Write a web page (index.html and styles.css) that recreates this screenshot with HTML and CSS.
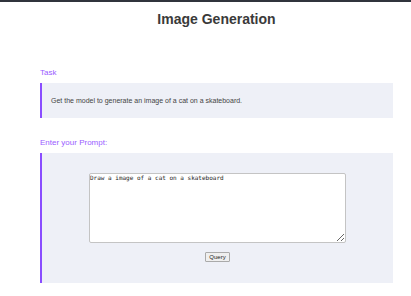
FILE: index.html
```html
<!DOCTYPE html>
<html lang="en">
<head>
    <meta charset="UTF-8">
    <meta name="viewport" content="width=device-width, initial-scale=1.0">
    <title>Image Generation</title>
    <link rel="stylesheet" href="styles.css">
</head>
<body>
    <header class="topbar"></header>

    <main class="page">
        <h1 class="title">Image Generation</h1>

        <section class="section task-section">
            <div class="section-label">Task</div>
            <div class="panel task-panel">
                <p>Get the model to generate an image of a cat on a skateboard.</p>
            </div>
        </section>

        <section class="section prompt-section">
            <label class="section-label" for="prompt">Enter your Prompt:</label>
            <div class="panel prompt-panel">
                <textarea id="prompt" spellcheck="false">Draw a image of a cat on a skateboard</textarea>
                <button type="button" class="query-btn">Query</button>
            </div>
        </section>
    </main>
</body>
</html>
```

FILE: styles.css
```css
:root {
    --accent-color: #9a5cff;
    --border-color: #8a4dff;
    --panel-color: #eef0f7;
    --text-color: #3a3a3a;
}

* {
    margin: 0;
    padding: 0;
    box-sizing: border-box;
}

body {
    font-family: "Liberation Sans", Arial, sans-serif;
    background-color: #fff;
    color: var(--text-color);
}

.topbar {
    height: 2px;
    background-color: #30343c;
}

.page {
    padding: 0 18px 0 40px;
}

.title {
    font-size: 14px;
    font-weight: bold;
    text-align: center;
    color: #3a3a3a;
    padding: 9px 0 0 0;
    line-height: 16px;
}

.section-label {
    display: block;
    font-size: 8px;
    line-height: 10px;
    color: var(--accent-color);
    margin-bottom: 5px;
}

.task-section {
    margin-top: 41px;
}

.prompt-section {
    margin-top: 20px;
}

.panel {
    background-color: var(--panel-color);
    border-left: 2px solid var(--border-color);
}

.task-panel {
    height: 35px;
    display: flex;
    align-items: center;
    padding: 0 9px;
    font-size: 7px;
    color: #444;
}

.prompt-panel {
    display: flex;
    flex-direction: column;
    align-items: center;
    padding: 20px 0 21px 0;
}

textarea {
    width: 257px;
    height: 70px;
    font-family: "DejaVu Sans Mono", monospace;
    font-size: 6px;
    line-height: 7px;
    padding: 0;
    border: 1px solid #c4c4c4;
    border-radius: 2px;
    background-color: #fff;
    color: #222;
    resize: vertical;
}

.query-btn {
    margin-top: 9px;
    height: 10px;
    padding: 0 3px;
    font-family: "Liberation Sans", Arial, sans-serif;
    font-size: 6px;
    line-height: 8px;
    color: #222;
    background-color: #efefef;
    border: 1px solid #aaa;
    border-radius: 1px;
}
```
